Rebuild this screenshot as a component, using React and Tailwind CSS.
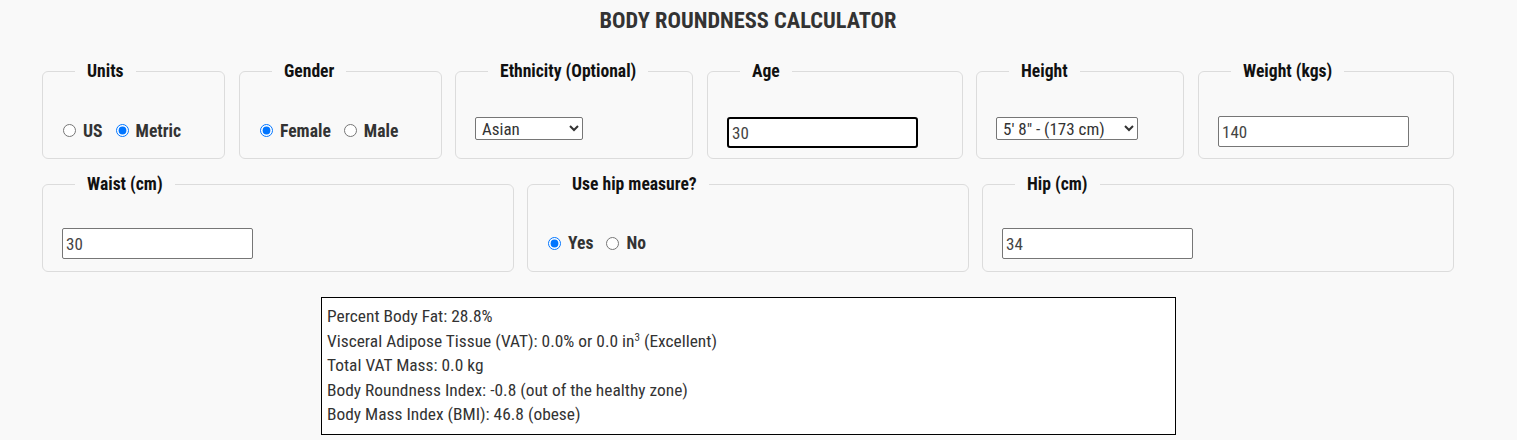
import React, { useState } from 'react';

const Box = ({ title, className, children }) => (
  <fieldset className={`border border-[#dcdcdc] rounded-[6px] px-[19px] pb-[12px] ${className}`}>
    <legend className="ml-[13px] px-3 text-[17.6px] leading-[20px] font-bold text-[#111]">{title}</legend>
    {children}
  </fieldset>
);

const Radio = ({ name, label, checked, onChange }) => (
  <label className="flex items-center mr-[12px]">
    <input type="radio" name={name} checked={checked} onChange={onChange} className="w-[13px] h-[13px] ml-[1px] mr-[7px] accent-[#0075ff]" />
    <span className="font-bold text-[17.6px] text-[#333]">{label}</span>
  </label>
);

const TextBox = ({ value, focused }) => (
  <input
    type="text"
    defaultValue={value}
    className={`h-[31px] w-[191px] bg-white px-[3px] text-[17px] text-[#444] ${focused ? 'border-2 border-black rounded-[3px]' : 'border border-[#767676] rounded-[2px]'}`}
  />
);

export default function App() {
  const [units, setUnits] = useState('metric');
  const [gender, setGender] = useState('female');
  const [hip, setHip] = useState('yes');

  return (
    <div className="min-h-screen bg-[#f9f9f9] font-['Roboto',sans-serif] font-stretch-condensed">
      <h1 className="w-[1496px] pt-[7px] text-center text-[22.4px] leading-[26px] font-bold text-[#333]">
        BODY ROUNDNESS CALCULATOR
      </h1>

      <div className="ml-[42px] w-[1412px] mt-[28px]">
        <div className="flex">
          <Box title="Units" className="w-[183px]">
            <div className="pt-[35px] h-[65px] flex items-center">
              <Radio name="units" label="US" checked={units === 'us'} onChange={() => setUnits('us')} />
              <Radio name="units" label="Metric" checked={units === 'metric'} onChange={() => setUnits('metric')} />
            </div>
          </Box>
          <Box title="Gender" className="w-[203px] ml-[14px]">
            <div className="pt-[35px] h-[65px] flex items-center">
              <Radio name="gender" label="Female" checked={gender === 'female'} onChange={() => setGender('female')} />
              <Radio name="gender" label="Male" checked={gender === 'male'} onChange={() => setGender('male')} />
            </div>
          </Box>
          <Box title="Ethnicity (Optional)" className="w-[238px] ml-[13px]">
            <div className="pt-[36px] h-[65px]">
              <select defaultValue="Asian" className="h-[23px] w-[108px] bg-white border border-[#767676] rounded-[2px] text-[17px] text-[#333] pl-[2px]">
                <option>Asian</option>
                <option>Other</option>
              </select>
            </div>
          </Box>
          <Box title="Age" className="w-[256px] ml-[14px]">
            <div className="pt-[36px] h-[65px]">
              <TextBox value="30" focused />
            </div>
          </Box>
          <Box title="Height" className="w-[208px] ml-[13px]">
            <div className="pt-[36px] h-[65px]">
              <select defaultValue="173" className="h-[23px] w-[142px] bg-white border border-[#767676] rounded-[2px] text-[17px] text-[#333] pl-[2px]">
                <option value="173">5' 8" - (173 cm)</option>
              </select>
            </div>
          </Box>
          <Box title="Weight (kgs)" className="w-[256px] ml-[14px]">
            <div className="pt-[35px] h-[65px]">
              <TextBox value="140" />
            </div>
          </Box>
        </div>

        <div className="flex mt-[15px]">
          <Box title="Waist (cm)" className="w-[472px]">
            <div className="pt-[34px] h-[65px]">
              <TextBox value="30" />
            </div>
          </Box>
          <Box title="Use hip measure?" className="w-[442px] ml-[13px]">
            <div className="pt-[34px] h-[65px] flex items-center">
              <Radio name="hip" label="Yes" checked={hip === 'yes'} onChange={() => setHip('yes')} />
              <Radio name="hip" label="No" checked={hip === 'no'} onChange={() => setHip('no')} />
            </div>
          </Box>
          <Box title="Hip (cm)" className="w-[472px] ml-[13px]">
            <div className="pt-[34px] h-[65px]">
              <TextBox value="34" />
            </div>
          </Box>
        </div>
      </div>

      <div className="ml-[321px] mt-[25px] w-[855px] border border-black bg-white px-[5px] pt-[6px] pb-[7px] text-[17.4px] leading-[24.5px] text-[#333]">
        <div>Percent Body Fat: 28.8%</div>
        <div>Visceral Adipose Tissue (VAT): 0.0% or 0.0 in<sup className="text-[11px]">3</sup> (Excellent)</div>
        <div>Total VAT Mass: 0.0 kg</div>
        <div>Body Roundness Index: -0.8 (out of the healthy zone)</div>
        <div>Body Mass Index (BMI): 46.8 (obese)</div>
      </div>
    </div>
  );
}
